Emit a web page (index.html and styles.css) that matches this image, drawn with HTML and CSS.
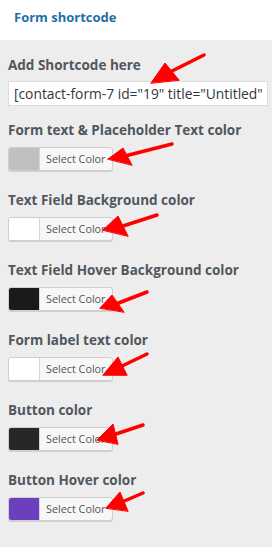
FILE: index.html
```html
<!DOCTYPE html>
<html>
<head>
<meta charset="utf-8">
<link rel="stylesheet" href="styles.css">
</head>
<body>
<div class="page">
  <div class="header">Form shortcode</div>
  <div class="panel">
    <div class="field first">
      <div class="label">Add Shortcode here</div>
      <input class="shortcode" type="text" value="[contact-form-7 id=&quot;19&quot; title=&quot;Untitled&quot;]">
    </div>
    <div class="field">
      <div class="label">Form text &amp; Placeholder Text color</div>
      <div class="picker"><span class="swatch sw-gray"></span><span class="picker-text">Select Color</span></div>
    </div>
    <div class="field">
      <div class="label">Text Field Background color</div>
      <div class="picker"><span class="swatch sw-white"></span><span class="picker-text">Select Color</span></div>
    </div>
    <div class="field">
      <div class="label">Text Field Hover Background color</div>
      <div class="picker"><span class="swatch sw-black"></span><span class="picker-text">Select Color</span></div>
    </div>
    <div class="field">
      <div class="label">Form label text color</div>
      <div class="picker"><span class="swatch sw-white"></span><span class="picker-text">Select Color</span></div>
    </div>
    <div class="field">
      <div class="label">Button color</div>
      <div class="picker"><span class="swatch sw-dark"></span><span class="picker-text">Select Color</span></div>
    </div>
    <div class="field">
      <div class="label">Button Hover color</div>
      <div class="picker"><span class="swatch sw-purple"></span><span class="picker-text">Select Color</span></div>
    </div>
  </div>
  <svg class="arrows" width="272" height="547" viewBox="0 0 272 547">
    <g stroke="#f00" stroke-width="3.5" stroke-linecap="round" fill="#f00">
      <line x1="204" y1="55" x2="170" y2="72"/>
      <polygon points="151,83 165,63 179,80" stroke-width="1"/>
      <line x1="172" y1="144" x2="125" y2="156"/>
      <polygon points="108,159 123,148 132,165" stroke-width="1"/>
      <line x1="157" y1="215" x2="120" y2="227"/>
      <polygon points="103,230 118,216 128,236" stroke-width="1"/>
      <line x1="147" y1="292" x2="116" y2="304"/>
      <polygon points="100,308 112,295 124,312" stroke-width="1"/>
      <line x1="147" y1="354" x2="120" y2="367"/>
      <polygon points="103,375 118,357 127,375" stroke-width="1"/>
      <line x1="143" y1="425" x2="113" y2="435"/>
      <polygon points="97,440 113,424 118,444" stroke-width="1"/>
      <line x1="143" y1="493" x2="122" y2="502"/>
      <polygon points="106,508 120,492 128,511" stroke-width="1"/>
    </g>
  </svg>
</div>
</body>
</html>
```
FILE: styles.css
```css
html, body {
  margin: 0;
  padding: 0;
  background: #ededed;
}
body {
  font-family: "Open Sans", "Noto Sans", sans-serif;
}
.page {
  position: relative;
  width: 272px;
  min-height: 547px;
}
.header {
  height: 40px;
  background: #fff;
  color: #1f6fa6;
  font-weight: 700;
  font-size: 13px;
  line-height: 20px;
  padding: 7px 0 0 14px;
  box-sizing: border-box;
}
.panel {
  padding: 15px 4px 0 8px;
}
.field {
  margin-bottom: 19px;
}
.field.first {
  margin-bottom: 14px;
}
.label {
  color: #50575e;
  font-weight: 700;
  font-size: 13.5px;
  line-height: 20px;
  margin-bottom: 7px;
  white-space: nowrap;
}
.field.first .label {
  margin-bottom: 6px;
}
.shortcode {
  display: block;
  box-sizing: border-box;
  width: 260px;
  height: 25px;
  margin: 0;
  padding: 0 5px;
  border: 1px solid #dcdcdc;
  background: #fff;
  color: #32373c;
  font-family: "Open Sans", "Noto Sans", sans-serif;
  font-size: 13.8px;
  outline: none;
}
.picker {
  display: flex;
  width: 105px;
  height: 24px;
  box-sizing: border-box;
  border: 1px solid #cfcfcf;
  border-radius: 3px;
  background: #f7f7f7;
  box-shadow: 0 1px 0 #cfcfcf;
  overflow: hidden;
}
.swatch {
  width: 30px;
  flex: none;
  border-right: 1px solid #d5d5d5;
}
.picker-text {
  flex: 1;
  font-size: 10.8px;
  line-height: 22px;
  color: #555;
  padding-left: 6px;
  white-space: nowrap;
}
.sw-gray { background: #c0c0c0; }
.sw-white { background: #fff; }
.sw-black { background: #1a1a1a; }
.sw-dark { background: #272727; }
.sw-purple { background: #6a40be; }
.arrows {
  position: absolute;
  left: 0;
  top: 0;
  pointer-events: none;
}
```
